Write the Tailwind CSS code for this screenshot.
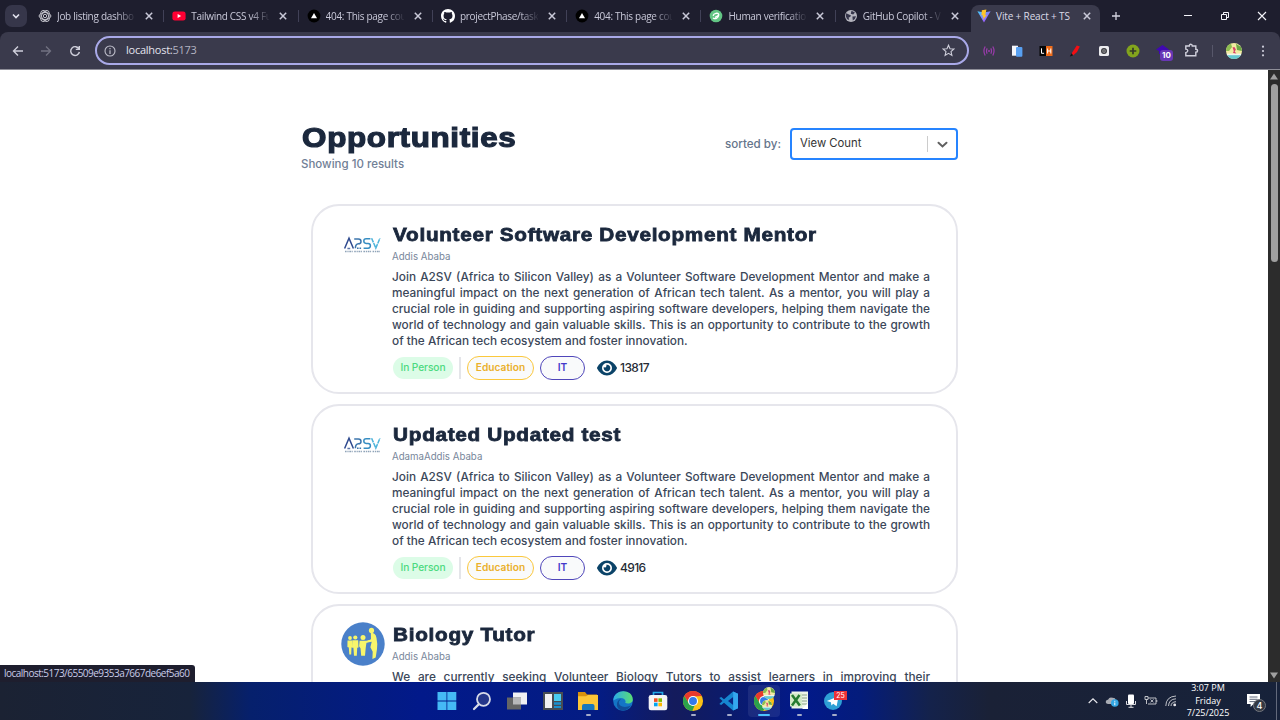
<!DOCTYPE html>
<html lang="en">
<head>
<meta charset="utf-8">
<title>Vite + React + TS</title>
<script src="https://cdn.jsdelivr.net/npm/@tailwindcss/browser@4"></script>
</head>
<body class="w-[1280px] h-[720px] overflow-hidden flex flex-col bg-white font-['Inter','Liberation_Sans',sans-serif]">

<!-- Shared symbols -->
<svg class="absolute w-0 h-0">
  <linearGradient id="vg" x1="0" y1="0" x2="1" y2="1"><stop offset="0" stop-color="#41d1ff"/><stop offset="1" stop-color="#bd34fe"/></linearGradient>
  <symbol id="x" viewBox="0 0 10 10"><path d="M1.8 1.8 8.2 8.2M8.2 1.8 1.8 8.2" stroke="#c9c9d8" stroke-width="1.5" fill="none"/></symbol>
  <symbol id="gpt" viewBox="0 0 14 14"><g fill="none" stroke="#c4c4cc" stroke-width="1"><ellipse cx="7" cy="7" rx="5.9" ry="3.5"/><ellipse cx="7" cy="7" rx="5.9" ry="3.5" transform="rotate(60 7 7)"/><ellipse cx="7" cy="7" rx="5.9" ry="3.5" transform="rotate(120 7 7)"/><circle cx="7" cy="7" r="1.7"/></g></symbol>
  <symbol id="yt" viewBox="0 0 14 14"><rect x="0.4" y="2.4" width="13.2" height="9.2" rx="2.4" fill="#ff0033"/><path d="M5.6 4.9v4.2L9.2 7z" fill="#fff"/></symbol>
  <symbol id="vercel" viewBox="0 0 14 14"><circle cx="7" cy="7" r="6.4" fill="#000"/><path d="M7 4 10 9.2H4z" fill="#fff"/></symbol>
  <symbol id="gh" viewBox="0 0 16 16"><path fill="#fff" d="M8 0C3.58 0 0 3.58 0 8c0 3.54 2.29 6.53 5.47 7.59.4.07.55-.17.55-.38 0-.19-.01-.82-.01-1.49-2.01.37-2.53-.49-2.69-.94-.09-.23-.48-.94-.82-1.13-.28-.15-.68-.52-.01-.53.63-.01 1.08.58 1.23.82.72 1.21 1.87.87 2.33.66.07-.52.28-.87.51-1.07-1.78-.2-3.64-.89-3.64-3.95 0-.87.31-1.59.82-2.15-.08-.2-.36-1.02.08-2.12 0 0 .67-.21 2.2.82.64-.18 1.32-.27 2-.27s1.36.09 2 .27c1.53-1.04 2.2-.82 2.2-.82.44 1.1.16 1.92.08 2.12.51.56.82 1.27.82 2.15 0 3.07-1.87 3.75-3.65 3.95.29.25.54.73.54 1.48 0 1.07-.01 1.93-.01 2.2 0 .21.15.46.55.38A8.01 8.01 0 0 0 16 8c0-4.42-3.58-8-8-8"/></symbol>
  <symbol id="human" viewBox="0 0 14 14"><circle cx="7" cy="7" r="6.3" fill="#62c584"/><path d="M4.3 6.4C4.6 4.3 9.2 3.4 9.8 5.4 10 7 7.6 7.2 6.4 8.2M9.7 6.2C9.4 9 6.5 10.5 4.4 9.2" fill="none" stroke="#fff" stroke-width="1.3" stroke-linecap="round"/></symbol>
  <symbol id="globe" viewBox="0 0 14 14"><circle cx="7" cy="7" r="6" fill="#b4b4bd"/><path d="M2.2 4.2 5 5.4 7 6.4 6.1 8.1 4.6 8.4 5.2 11 3 9.9 1.8 7zM7.5 1.8 11 3.6 9.2 5.6 6.8 4.7zM8.4 7.6 12 7.2 10.8 10 8.8 11.6z" fill="#35354a"/></symbol>
  <symbol id="vite" viewBox="0 0 14 14"><path d="M.4 2.2 7 13.6 13.6 2.2 7 3.4z" fill="url(#vg)"/><path d="M9.4.4 4.8 1.3 4.5 6.5l1.5-.3-.5 2.2 1.2-.4-.8 3L9.8 6l-1.5.2z" fill="#ffc529"/></symbol>
  <symbol id="a2sv" viewBox="0 0 38 18"><g fill="none" stroke-width="1.5"><path d="M1.6 12.5 6 2.2 10.4 12.5" stroke="#2f4a8f"/><path d="M4.4 12.5h2.8" stroke="#5b74aa"/><path d="M11.2 3h4.2q2.6 0 2.6 2.4t-2.6 2.4q-3 .2-3 4.5" stroke="#3c76ad"/><path d="M14 12.2h4.6" stroke="#3c76ad" stroke-dasharray="1.6 .9"/><path d="M27.4 2.8h-4.2q-2.4 0-2.4 2.2t2.4 2.4h2q2.2.1 2.2 2.4t-2.4 2.4h-4.4" stroke="#368dc2"/><path d="M28.6 2.2 32.8 12 37 2.2" stroke="#4bb4db" stroke-dasharray="4.5 .7"/></g><path d="M2 15.5h35" stroke="#8fa3b8" stroke-width="1.5" stroke-dasharray="1.6 .8 1.2 .7 1.8 .6 1 1.5"/></symbol>
  <symbol id="people" viewBox="0 0 44 44"><circle cx="22" cy="22" r="21.7" fill="#4a80c9"/><g fill="#f7f56b"><circle cx="9" cy="16" r="1.9"/><path d="M6.5 18.5h5l.5 7-1.5 0-.3 7H8.3l-.5-7-1.4-.5z"/><circle cx="14.3" cy="15.5" r="2.1"/><path d="M11.5 18.2h5.7l.3 7.3-1.3.3-.4 8H13l-.6-8-1.1-.4z"/><circle cx="22" cy="15.5" r="2.5"/><path d="M18.6 18.7h6.6l4.2-1 .3 1.4-4.3 2-.7 4.9-.7 7.8h-3.8l-.7-7.5-1.4-2.1z"/><circle cx="30.5" cy="8.4" r="2.6"/><path d="M29.8 10.6q4.8.2 5.7 5.4 1.2 5.7.5 11l-1.3 8.4-3.3 1.6.3-7.3-2.3-4.5 1.3-5.4-4.3.8-.2-1.3 3.8-2.1z"/></g></symbol>
  <symbol id="eye" viewBox="0 0 576 512"><path fill="#0b4368" d="M572.5 241.4C518.3 135.6 410.9 40 288 40S57.7 135.6 3.5 241.4a32.4 32.4 0 0 0 0 29.2C57.7 376.4 165.1 472 288 472s230.3-95.6 284.5-201.4a32.4 32.4 0 0 0 0-29.2zM288 400a144 144 0 1 1 144-144 144 144 0 0 1-144 144zm0-240a95.3 95.3 0 0 0-25.3 3.8 47.9 47.9 0 0 1-66.9 66.9A95.8 95.8 0 1 0 288 160z"/></symbol>
  <symbol id="chrome" viewBox="0 0 24 24"><circle cx="12" cy="12" r="11" fill="#fbc116"/><path d="M2.5 6.5A11 11 0 0 1 21.5 6.5L12 7 7.5 14.5z" fill="#e8392c"/><path d="M2.5 6.5 7.6 14.6 14 16.4 11.2 23A11 11 0 0 1 2.5 6.5" fill="#2ba24c"/><circle cx="12" cy="12" r="5.5" fill="#fff"/><circle cx="12" cy="12" r="4.3" fill="#3279ea"/></symbol>
  <symbol id="avatar" viewBox="0 0 16 16"><circle cx="8" cy="8" r="8" fill="#f1eba0"/><path d="M0 8a8 8 0 0 1 5-7.4L6 4 3 8z" fill="#8dbd51"/><path d="M10 .8 15 4 16 8 11 7z" fill="#6aa844"/><path d="M.6 11h14.8A8 8 0 0 1 .6 11" fill="#65c9d0"/><path d="M1 10.6h14v1.6h-14z" fill="#f5f5ed"/><path d="M6.5 4.2h2.2l1.2 2.6-1.3 1.6 1.8 2-3.4-.4.8-2z" fill="#d73f6a"/></symbol>
</svg>

<!-- Tab strip -->
<header class="h-8 shrink-0 bg-[#1e1e2e] flex items-stretch text-[10px] text-[#c9c9d9] font-['Open_Sans','Noto_Sans',sans-serif]">
  <div class="w-[30px] pl-[5px] flex items-center"><div class="w-[22px] h-[22px] rounded-[7px] bg-[#36364a] flex items-center justify-center"><svg class="w-2 h-2" viewBox="0 0 8 8"><path d="M1 2.5 4 5.5 7 2.5" fill="none" stroke="#e1e1ed" stroke-width="1.6"/></svg></div></div>
  <div id="tabs" class="flex"></div>
  <div class="relative w-[131px] h-full flex items-center pl-[7px] before:absolute before:inset-x-px before:top-[5px] before:bottom-0 before:bg-[#3a3a4c] before:rounded-t-lg">
    <svg class="relative w-[14px] h-[14px]"><use href="#vite"/></svg>
    <span class="relative ml-[5px] w-[84px] tracking-[-0.15px] text-[#dadae8] whitespace-nowrap">Vite + React + TS</span>
    <svg class="relative w-[10px] h-[10px] ml-0.5"><use href="#x"/></svg>
  </div>
  <div class="flex-1 flex items-center pl-[10px]">
    <svg class="w-[10px] h-[10px]" viewBox="0 0 10 10"><path d="M5 1v8M1 5h8" stroke="#d3d3df" stroke-width="1.3"/></svg>
    <svg class="w-[10px] h-[10px] ml-[62px]" viewBox="0 0 10 10"><path d="M1 4.5h8" stroke="#f5f5fa"/></svg>
    <svg class="w-[10px] h-[10px] ml-[27px]" viewBox="0 0 10 10"><path d="M1.5 3.5h5v5h-5zM3.5 3.3V1.5H8.5v5H6.8" fill="none" stroke="#f5f5fa"/></svg>
    <svg class="w-[10px] h-[10px] ml-[27px]" viewBox="0 0 10 10"><path d="M1 1 9 9M9 1 1 9" stroke="#f5f5fa" stroke-width="1.1"/></svg>
  </div>
</header>

<!-- Toolbar -->
<div class="h-[38px] shrink-0 bg-[#1e1e2e]"><div class="h-full bg-[#3a3a4c] rounded-t-lg border-b border-[#8e8e98] flex items-center">
  <svg class="w-3 h-3 ml-3" viewBox="0 0 12 12"><path d="M11 6H1.5M6 1.5 1.5 6 6 10.5" fill="none" stroke="#cfcfdb" stroke-width="1.4"/></svg>
  <svg class="w-3 h-3 ml-4" viewBox="0 0 12 12"><path d="M1 6h9.5M6 1.5 10.5 6 6 10.5" fill="none" stroke="#717181" stroke-width="1.3"/></svg>
  <svg class="w-3 h-3 ml-[17px]" viewBox="0 0 12 12"><path d="M10 4A4.4 4.4 0 1 0 10.4 7M10.3 1V4.4H6.8" fill="none" stroke="#cfcfdb" stroke-width="1.4"/></svg>
  <div class="ml-[14px] w-[874px] h-[29px] rounded-full border-2 border-[#a9a9e8] flex items-center pl-[7px] pr-[12px]">
    <svg class="w-3 h-3" viewBox="0 0 12 12"><circle cx="6" cy="6" r="5" fill="none" stroke="#bfbfcb" stroke-width="1.1"/><path d="M6 5.3V9M6 3v1.3" stroke="#bfbfcb" stroke-width="1.2"/></svg>
    <span class="ml-[10px] text-[11px] tracking-[-0.25px] text-[#e3e3ee] font-['Open_Sans','Noto_Sans',sans-serif]">localhost:<span class="text-[#b3b3c2]">5173</span></span>
    <svg class="w-[13px] h-[13px] ml-auto" viewBox="0 0 13 13"><path d="M6.5 1.2 8 4.7l3.9.3L9 7.6l.9 3.8-3.4-2-3.4 2L4 7.6 1.1 5 5 4.7z" fill="none" stroke="#cfcfdb" stroke-width="1.1"/></svg>
  </div>
  <div class="flex items-center ml-[14px]">
    <svg class="w-3 h-3" viewBox="0 0 12 12"><g fill="none" stroke="#9c3cae" stroke-width="1.2"><path d="M2.2 1.5Q-.3 6 2.2 10.5M4.2 3.4Q2.8 6 4.2 8.6M9.8 1.5Q12.3 6 9.8 10.5M7.8 3.4Q9.2 6 7.8 8.6"/></g><circle cx="6" cy="6" r="1" fill="#9c3cae"/></svg>
    <svg class="w-3 h-3 ml-4" viewBox="0 0 12 12"><path d="M1 .7h6v10H1z" fill="#f4f5fa"/><rect x="5" y="2" width="6.4" height="9.7" rx="1" fill="#58a0f2"/></svg>
    <svg class="w-[14px] h-3 ml-4" viewBox="0 0 14 12"><path d="M.5 1h7v10h-7z" fill="#050505"/><path d="M7 1h6.5v10H7z" fill="#ef6b18"/><path d="M2.5 3.3v5h2.6M8.6 3.5v5M11.8 3.5v5M8.6 6h3.2" fill="none" stroke="#fff"/></svg>
    <svg class="w-3 h-3 ml-4" viewBox="0 0 12 12"><path d="M7.8.5 10.8 1.4 8 7 4 10.5 2.7 8.2z" fill="#f30e13"/><path d="M2.7 8.2 4 10.5.8 11.6z" fill="#111"/></svg>
    <svg class="w-3 h-3 ml-[17px]" viewBox="0 0 12 12"><rect x="1" y="1" width="10" height="10" rx="1.6" fill="#ececef"/><circle cx="6" cy="6" r="2.4" fill="#9a9a9e" stroke="#3d3d42" stroke-width="1.2"/><path d="M4.6 6h2.8" stroke="#333" stroke-width=".9"/></svg>
    <svg class="w-[14px] h-[14px] ml-4" viewBox="0 0 14 14"><circle cx="7" cy="7" r="6.5" fill="#82a41d"/><path d="M7 3.7v6.6M3.7 7h6.6" stroke="#33382a" stroke-width="1.7"/></svg>
    <div class="relative ml-4 w-[15px] h-[14px]"><svg class="w-[15px] h-[14px]" viewBox="0 0 15 14"><path d="M0 5.5 6.5 1 13 5.5 10.5 7v3H3V7z" fill="#4008b2"/></svg><span class="absolute left-[4px] top-[6px] w-[13px] h-[11px] rounded-[3px] bg-[#6837b5] text-white text-[8px] leading-[11px] font-bold text-center">10</span></div>
    <svg class="w-[15px] h-[15px] ml-[13px]" viewBox="0 0 15 15"><path d="M1.8 3H5.3Q5.3 1.2 6.8 1.2T8.3 3H11.8V6.3Q13.6 6.3 13.6 7.8T11.8 9.3V12.7H1.8V9.6Q3.8 9.2 3.8 7.8T1.8 6.1z" fill="none" stroke="#cfcfdb" stroke-width="1.4"/></svg>
    <div class="w-px h-3 bg-[#57576a] ml-[13px]"></div>
    <svg class="w-4 h-4 ml-[13px]"><use href="#avatar"/></svg>
    <svg class="w-1 h-3 ml-[19px]" viewBox="0 0 4 12"><g fill="#cfcfdb"><circle cx="2" cy="1.7" r="1.1"/><circle cx="2" cy="6" r="1.1"/><circle cx="2" cy="10.3" r="1.1"/></g></svg>
  </div>
</div></div>

<!-- Page -->
<div class="relative flex h-[612px] shrink-0 overflow-hidden">
  <main class="w-[1268px] pl-[301px] pr-[310px] pt-[52px]">
    <div class="flex justify-between items-start">
      <div>
        <h1 class="w-fit pl-px origin-left scale-x-112 text-[28px] leading-8 font-bold tracking-[0.6px] [-webkit-text-stroke:1.2px_#1b283d] text-[#1b283d] whitespace-nowrap font-['Liberation_Sans',sans-serif]">Opportunities</h1>
        <p class="w-fit mt-[2px] text-[11.5px] leading-4 font-medium text-[#718096]">Showing 10 results</p>
      </div>
      <div class="flex items-center mt-[6px]">
        <span class="text-[11.6px] font-medium text-[#66758b] mr-[9px] pt-[2px]">sorted by:</span>
        <div class="w-[168px] h-8 rounded border-2 border-[#2684ff] flex items-center pl-[8px] pr-[8px]">
          <span class="text-[11.3px] text-[#333] pb-px">View Count</span>
          <span class="ml-auto w-px h-4 bg-[#ccc] mr-[9px]"></span>
          <svg class="w-[11px] h-[11px]" viewBox="0 0 11 11"><path d="M1.5 3.8 5.5 7.5 9.5 3.8" fill="none" stroke="#606060" stroke-width="2" stroke-linecap="round"/></svg>
        </div>
      </div>
    </div>
    <div id="cards" class="mt-[32px] ml-[10px] w-[647px] flex flex-col gap-[10px]"></div>
  </main>
  <div class="w-3 bg-[#2c2c2c] flex flex-col items-center justify-between py-[3px]">
    <div class="flex flex-col items-center gap-[4px]"><svg class="w-2 h-[7px]" viewBox="0 0 8 7"><path d="M4 .5 8 6.5H0z" fill="#9f9f9f"/></svg><div class="w-[7px] h-[178px] rounded-full bg-[#9f9f9f]"></div></div>
    <svg class="w-2 h-[7px]" viewBox="0 0 8 7"><path d="M4 6.5 8 .5H0z" fill="#9f9f9f"/></svg>
  </div>
  <div class="absolute left-0 bottom-0 w-[195px] h-[17px] bg-[#1e1e2e] rounded-tr-[3px] pl-1 text-[10px] leading-[17px] tracking-[-0.52px] text-[#c9cce8] whitespace-nowrap font-['Open_Sans','Noto_Sans',sans-serif]">localhost:5173/65509e9353a7667de6ef5a60</div>
</div>

<!-- Taskbar -->
<footer class="h-[38px] shrink-0 flex items-center bg-[linear-gradient(90deg,#1b2233_0px,#17233b_190px,#06206c_250px,#02198a_420px,#041c83_600px,#141b5c_675px,#0b1b6c_730px,#02198a_800px,#041c7c_860px,#14224b_930px,#1a2136_990px,#17223a_1280px)]">
  <div class="w-full h-full flex items-center pl-[436px]">
    <div class="flex items-center gap-[13.2px]">
      <div class="w-[22px] h-full flex justify-center"><svg class="w-5 h-5" viewBox="0 0 20 20"><path d="M.5 1h9v8.6h-9zM10.3 1h9v8.6h-9zM.5 10.4h9V19h-9zM10.3 10.4h9V19h-9z" fill="#45b9f5"/></svg></div>
      <svg class="w-[22px] h-[22px]" viewBox="0 0 22 22"><circle cx="12.5" cy="9.3" r="6.5" fill="#24368a" stroke="#d7dae8" stroke-width="1.8"/><path d="M7.7 14.4 3 19" stroke="#d7dae8" stroke-width="2.2" stroke-linecap="round"/></svg>
      <svg class="w-[22px] h-[22px]" viewBox="0 0 22 22"><path d="M7 2.5h14v12H7z" fill="#f0f0f3"/><path d="M1 7.5h14v12H1z" fill="#656565" /><path d="M7 7.5h8v7H7z" fill="#b8b8ba"/></svg>
      <svg class="w-[22px] h-[22px]" viewBox="0 0 22 22"><path d="M1 2h20v18H1z" fill="#474d53"/><path d="M3 4h7v14H3z" fill="#f1f2f3"/><path d="M12 4h7v7h-7z" fill="#48ccef"/><path d="M12 12.3h7v2.4h-7zM12 16h7v2h-7z" fill="#1890ce"/></svg>
      <div class="relative w-[22px] h-[22px]"><svg class="w-[22px] h-[22px]" viewBox="0 0 22 22"><path d="M1 2h7l2 2.5h10v5H1z" fill="#d8910d"/><path d="M1 6.3h8l2-1.4h10V20H1z" fill="#fcc637"/><path d="M5 20v-4q0-2 2-2h8.5q2 0 2 2v4z" fill="#1778be"/></svg><i class="absolute left-[9px] top-[24px] w-[5px] h-[2px] rounded-full bg-[#a5acc9]"></i></div>
      <svg class="w-[22px] h-[22px]" viewBox="0 0 22 22"><defs><linearGradient id="eg"><stop stop-color="#2bacea"/><stop offset="1" stop-color="#5bdd72"/></linearGradient></defs><circle cx="11" cy="11" r="9.8" fill="#1475c6"/><path d="M1.2 10.5C2-1.8 21-1.4 20.8 9.8 20.6 14 15 14 13.2 12.8 15.2 9 9 5.2 1.2 10.5" fill="url(#eg)"/><path d="M7 11.3C5.8 17 13.5 18.5 19 15.3 16 21 9.4 21.8 6.5 18.7 3.5 15 5.2 9.5 9 9.2z" fill="#114d99"/></svg>
      <svg class="w-[22px] h-[22px]" viewBox="0 0 22 22"><path d="M6.5 6V2.5h9V6" fill="none" stroke="#22a7e6" stroke-width="1.7"/><rect x="1.7" y="5" width="18.6" height="15.3" rx="2.3" fill="#f4f4f7"/><path d="M7 8.3h3.6v3.6H7z" fill="#f25022"/><path d="M11.4 8.3H15v3.6h-3.6z" fill="#7fba00"/><path d="M7 12.7h3.6v3.6H7z" fill="#00a4ef"/><path d="M11.4 12.7H15v3.6h-3.6z" fill="#ffb900"/></svg>
      <div class="relative w-[22px] h-[22px]"><svg class="w-[22px] h-[22px]"><use href="#chrome"/></svg><i class="absolute left-[9px] top-[24px] w-[5px] h-[2px] rounded-full bg-[#a5acc9]"></i></div>
      <div class="relative w-[22px] h-[22px]"><svg class="w-[22px] h-[22px]" viewBox="0 0 22 22"><path d="M15 1.5 20 3.7v14.6L15 20.5 6 12.8 3.2 15 1.3 14 4.5 11 1.3 8l1.9-1L6 9.2z" fill="#1686d0"/><path d="M15.2 7 10 11l5.2 4z" fill="#0b2484"/><path d="M15.2 1.5 20 3.7v14.6l-4.8 2.2z" fill="#35a7ef"/></svg><i class="absolute left-[9px] top-[24px] w-[5px] h-[2px] rounded-full bg-[#a5acc9]"></i></div>
      <div class="relative w-[22px] h-[22px] before:absolute before:-inset-x-[5px] before:-top-[5px] before:h-[32px] before:rounded before:bg-white/8"><svg class="relative w-[22px] h-[22px]"><use href="#chrome"/></svg><svg class="absolute w-3 h-3 left-[10px] -top-[3px]"><use href="#avatar"/></svg><svg class="absolute w-[10px] h-[10px] left-[9px] top-[10px]"><use href="#avatar"/></svg><i class="absolute left-[5px] top-[24px] w-[12px] h-[2px] rounded-full bg-[#4cc2ff]"></i></div>
      <div class="relative w-[22px] h-[22px]"><svg class="w-[22px] h-[22px]" viewBox="0 0 22 22"><path d="M3.5 1.5h16.5v17H3.5z" fill="#edf4e9"/><path d="M13 5h6M13 8h6M13 11h6M13 14h6" stroke="#8aa486"/><path d="M2 3.5h12v13H2z" fill="#d3e9c7"/><path d="M4 5 11.8 15.5M11.5 5 4 15.5" stroke="#257b31" stroke-width="2.5"/><path d="m14 19 6-6v6z" fill="#fff"/></svg><i class="absolute left-[9px] top-[24px] w-[5px] h-[2px] rounded-full bg-[#a5acc9]"></i></div>
      <div class="relative w-[22px] h-[22px]"><svg class="w-[22px] h-[22px]" viewBox="0 0 22 22"><circle cx="10" cy="11" r="9" fill="#2e9fd5"/><path d="m3.8 11 11.8-4.7-2 10-3.4-2.5-1.8 1.7-.5-3.2z" fill="#fff"/></svg><span class="absolute left-[11px] top-[1px] w-[13px] h-[9px] bg-[#ed3237] text-white text-[7px] leading-[9px] text-center">25</span><i class="absolute left-[9px] top-[24px] w-[5px] h-[2px] rounded-full bg-[#a5acc9]"></i></div>
    </div>
    <div class="flex items-center ml-auto">
      <svg class="w-[10px] h-[10px]" viewBox="0 0 10 10"><path d="M.7 7 5 2.8 9.3 7" fill="none" stroke="#e8e8ed" stroke-width="1.1"/></svg>
      <svg class="w-[14px] h-[14px] ml-[7px]" viewBox="0 0 14 14"><path d="M3.2 10Q.5 9.8.8 7.4 1.2 5.6 3 5.8 4.5 2.5 7.4 3.7 10.5 3.5 10.7 6L9 10z" fill="#a9acb4"/><circle cx="9.8" cy="9" r="3.8" fill="#35a8e5"/><path d="M9.8 8.5v2.7M9.8 6.8V7.8" stroke="#fff"/></svg>
      <svg class="w-[12px] h-[14px] ml-[6px]" viewBox="0 0 12 14"><rect x="3" y=".5" width="6" height="9.5" rx="1" fill="#fff"/><path d="M1.5 7v3.5h9V7M6 11v2.5M3.5 13.3h5" fill="none" stroke="#d9d9dd"/></svg>
      <svg class="w-[14px] h-3 ml-[7px]" viewBox="0 0 14 12"><path d="M4 3h8v6H4M12.8 5v2M6.5 4.4l3 3M9.5 4.4l-3 3M1 1.5h3v3H1zM2.5 4.5V9" fill="none" stroke="#d0d1d6" stroke-width=".9"/></svg>
      <svg class="w-3 h-3 ml-[7px]" viewBox="0 0 12 12"><path d="M.8 11Q1 1.5 11 1M3.5 11Q3.8 4.2 11 3.8M6 11Q6.2 7 11 6.7" fill="none" stroke="#d0d1d6" stroke-width=".9"/><circle cx="9.7" cy="9.9" r="1.4" fill="#e8e8ed"/></svg>
      <div class="w-[50px] ml-[6px] text-center text-[9px] leading-[12.7px] text-white whitespace-nowrap font-['Open_Sans','Noto_Sans',sans-serif]">3:07 PM<br>Friday<br>7/25/2025</div>
      <div class="relative w-[28px] h-[22px] ml-[12px]"><svg class="w-[22px] h-[22px]" viewBox="0 0 22 22"><path d="M2 4h13v10H8.5L5.6 17v-3H2z" fill="#fff"/><path d="M4.5 7h8M4.5 9.3h8M4.5 11.6h8" stroke="#39425a" stroke-width=".8"/></svg><span class="absolute left-[8px] top-[9px] w-[13px] h-[13px] rounded-full bg-[#343943] border border-[#74777f] text-white text-[9px] leading-[11px] font-medium text-center">4</span></div>
      <div class="w-px h-[38px] bg-[#62697b] ml-[3px] mr-[3px]"></div>
    </div>
  </div>
</footer>

<script>
const tabs = [['gpt','Job listing dashbo'],['yt','Tailwind CSS v4 Fu'],['vercel','404: This page cou'],['gh','projectPhase/task'],['vercel','404: This page cou'],['human','Human verificatio'],['globe','GitHub Copilot - V']];
document.getElementById('tabs').innerHTML = tabs.map(([icon, label], i) => `
  <div class="w-[134.3px] flex items-center pl-[8px]">
    <svg class="w-[14px] h-[14px] shrink-0"><use href="#${icon}"/></svg>
    <span class="ml-[5px] w-[78px] tracking-[-0.3px] whitespace-nowrap [mask-image:linear-gradient(90deg,#000_76%,transparent_102%)]">${label}</span>
    <svg class="w-[10px] h-[10px] shrink-0 ml-[9px]"><use href="#x"/></svg>
    <i class="ml-auto w-px h-3 ${i === 6 ? 'bg-transparent' : 'bg-[#414157]'}"></i>
  </div>`).join('');

const join = ['Join A2SV (Africa to Silicon Valley) as a Volunteer Software Development Mentor and make a','meaningful impact on the next generation of African tech talent. As a mentor, you will play a','crucial role in guiding and supporting aspiring software developers, helping them navigate the','world of technology and gain valuable skills. This is an opportunity to contribute to the growth','of the African tech ecosystem and foster innovation.'];
const jobs = [
  {logo:'a2sv', title:'Volunteer Software Development Mentor', place:'Addis Ababa', lines:join, views:13817},
  {logo:'a2sv', title:'Updated Updated test', place:'AdamaAddis Ababa', lines:join, views:4916},
  {logo:'people', title:'Biology Tutor', place:'Addis Ababa', lines:['We are currently seeking Volunteer Biology Tutors to assist learners in improving their'], views:null},
];
document.getElementById('cards').innerHTML = jobs.map(j => `
  <article class="h-[190px] rounded-[28px] border-2 border-[#e6e6ec] flex pt-[15px] pl-[28px]">
    <div class="w-[44px] h-[44px] mt-px mr-[7px] shrink-0 flex items-center justify-center">${j.logo === 'a2sv' ? '<svg class="w-[38px] h-[18px] mt-px mr-[2px]"><use href="#a2sv"/></svg>' : '<svg class="w-[44px] h-[44px]"><use href="#people"/></svg>'}</div>
    <div class="w-[538px]">
      <h2 class="w-fit pl-px origin-left scale-x-112 text-[18.5px] leading-7 font-bold tracking-[0.62px] [-webkit-text-stroke:0.8px_#1b283d] text-[#1b283d] whitespace-nowrap font-['Liberation_Sans',sans-serif]">${j.title}</h2>
      <p class="w-fit text-[9.7px] leading-4 text-[#77869a]">${j.place}</p>
      <div class="mt-[4px] text-[11.8px] leading-4 font-medium text-[#3b4759] h-[80px]">${j.lines.map((l, k) => `<p class="whitespace-nowrap h-4 ${k < 4 ? '[text-align-last:justify]' : ''}">${l}</p>`).join('')}</div>
      ${j.views === null ? '' : `<div class="mt-[7px] flex items-center h-6 text-[10.2px] font-semibold">
        <span class="w-[60px] h-[22px] ml-px rounded-full bg-[#dcfce7] text-[#4cda80] flex items-center justify-center font-medium tracking-[-0.1px]">In Person</span>
        <span class="w-[2px] h-[22px] bg-[#e4e5e9] ml-[6px]"></span>
        <span class="w-[67px] h-6 ml-[6px] rounded-full border border-[#fbc83c] bg-[#f9fafb] text-[#eab02c] flex items-center justify-center">Education</span>
        <span class="w-[45px] h-6 ml-[6px] rounded-full border border-[#4f46ba] bg-[#f9fafb] text-[#4338ca] flex items-center justify-center">IT</span>
        <svg class="w-5 h-[18px] ml-[12px]"><use href="#eye"/></svg>
        <span class="ml-[3px] text-[12px] font-medium tracking-[-0.6px] text-[#252b35]">${j.views}</span>
      </div>`}
    </div>
  </article>`).join('');
</script>
</body>
</html>
